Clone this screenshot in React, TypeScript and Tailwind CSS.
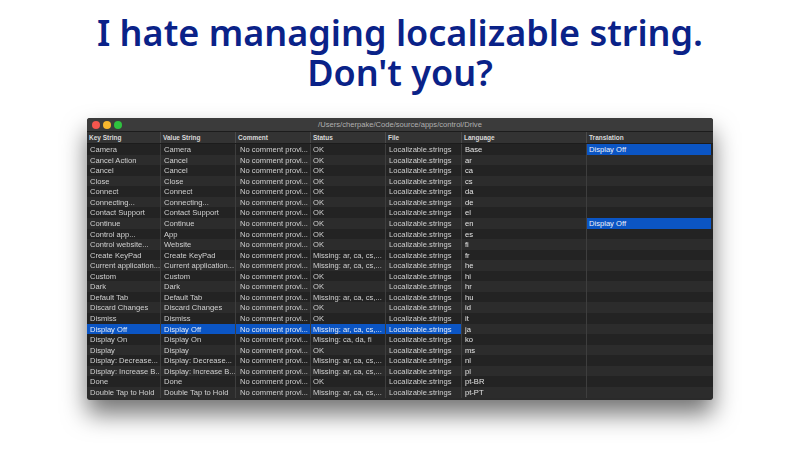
const rows: [string, string, string][] = [
  ["Camera", "Camera", "OK"],
  ["Cancel Action", "Cancel", "OK"],
  ["Cancel", "Cancel", "OK"],
  ["Close", "Close", "OK"],
  ["Connect", "Connect", "OK"],
  ["Connecting...", "Connecting...", "OK"],
  ["Contact Support", "Contact Support", "OK"],
  ["Continue", "Continue", "OK"],
  ["Control app...", "App", "OK"],
  ["Control website...", "Website", "OK"],
  ["Create KeyPad", "Create KeyPad", "Missing: ar, ca, cs,..."],
  ["Current application...", "Current application...", "Missing: ar, ca, cs,..."],
  ["Custom", "Custom", "OK"],
  ["Dark", "Dark", "OK"],
  ["Default Tab", "Default Tab", "Missing: ar, ca, cs,..."],
  ["Discard Changes", "Discard Changes", "OK"],
  ["Dismiss", "Dismiss", "OK"],
  ["Display Off", "Display Off", "Missing: ar, ca, cs,..."],
  ["Display On", "Display On", "Missing: ca, da, fi"],
  ["Display", "Display", "OK"],
  ["Display: Decrease...", "Display: Decrease...", "Missing: ar, ca, cs,..."],
  ["Display: Increase B...", "Display: Increase B...", "Missing: ar, ca, cs,..."],
  ["Done", "Done", "OK"],
  ["Double Tap to Hold", "Double Tap to Hold", "Missing: ar, ca, cs,..."],
];
const langs = ["Base", "ar", "ca", "cs", "da", "de", "el", "en", "es", "fi", "fr", "he", "hi", "hr", "hu", "id", "it", "ja", "ko", "ms", "nl", "pl", "pt-BR", "pt-PT"];
const headers = ["Key String", "Value String", "Comment", "Status", "File", "Language", "Translation"];
const grid = "grid grid-cols-[74px_75px_75px_75px_76px_125px_1fr]";

export default function App() {
  return (
    <div className="w-[800px] h-[460px] bg-white flex flex-col items-center overflow-hidden font-['Liberation_Sans',sans-serif]">
      <h1 className="mt-[13px] text-center text-[36px] leading-[40px] font-semibold text-[#0a2288] font-['Noto_Sans',sans-serif]">
        I hate managing localizable string.
        <br />
        Don't you?
      </h1>
      <div className="mt-[25px] w-[626px] h-[282px] rounded-[3px] bg-[#2a2a2a] shadow-[0_14px_24px_rgba(0,0,0,0.55)] flex flex-col overflow-hidden blur-[0.3px]">
        <div className="relative h-[13px] bg-[#3b3b3b] flex items-center justify-center shrink-0">
          <div className="absolute left-[5px] top-[2.5px] flex gap-[3px]">
            <span className="w-[8px] h-[8px] rounded-full bg-[#f4564e]" />
            <span className="w-[8px] h-[8px] rounded-full bg-[#f8b82e]" />
            <span className="w-[8px] h-[8px] rounded-full bg-[#2fc23f]" />
          </div>
          <span className="text-[7.6px] leading-none text-[#b0b0b0]">/Users/cherpake/Code/source/apps/control/Drive</span>
        </div>
        <div className={`${grid} h-[13px] shrink-0 bg-[#333333] border-t border-[#1c1c1c] border-b`}>
          {headers.map((h) => (
            <div key={h} className="pl-[2px] border-r border-[#4a4a4a] last:border-r-0 text-[6.5px] font-bold leading-[11px] text-[#d8d8d8]">
              {h}
            </div>
          ))}
        </div>
        <div className="flex-1 flex flex-col">
          {rows.map((r, i) => {
            const sel = i === 17;
            const translated = i === 0 || i === 7;
            const cell = "pl-[3px] border-r border-[#3e3e3e] whitespace-nowrap overflow-hidden";
            const tone = sel ? "bg-[#0b55c4] text-[#e6edf8]" : "text-[#d0d0d0] grayscale";
            return (
              <div
                key={r[0]}
                className={`${grid} h-[10.57px] text-[7.6px] leading-[12px] ${i % 2 ? "bg-[#2c2c2c]" : "bg-[#232323]"}`}
              >
                <div className={`${cell} ${tone}`}>{r[0]}</div>
                <div className={`${cell} ${tone}`}>{r[1]}</div>
                <div className={`pl-[4px] border-r border-[#3e3e3e] whitespace-nowrap overflow-hidden ${tone}`}>No comment provi...</div>
                <div className={`pl-[2px] border-r border-[#3e3e3e] whitespace-nowrap overflow-hidden ${tone}`}>{r[2]}</div>
                <div className={`${cell} ${tone}`}>Localizable.strings</div>
                <div className="pl-[3px] border-r border-[#3e3e3e] text-[#e4e4e4] overflow-hidden grayscale">{langs[i]}</div>
                <div className="pr-[2px] overflow-hidden">
                  {translated && <div className="pl-[2px] h-full bg-[#0b55c4] text-[#eef2fa]">Display Off</div>}
                </div>
              </div>
            );
          })}
        </div>
      </div>
    </div>
  );
}
